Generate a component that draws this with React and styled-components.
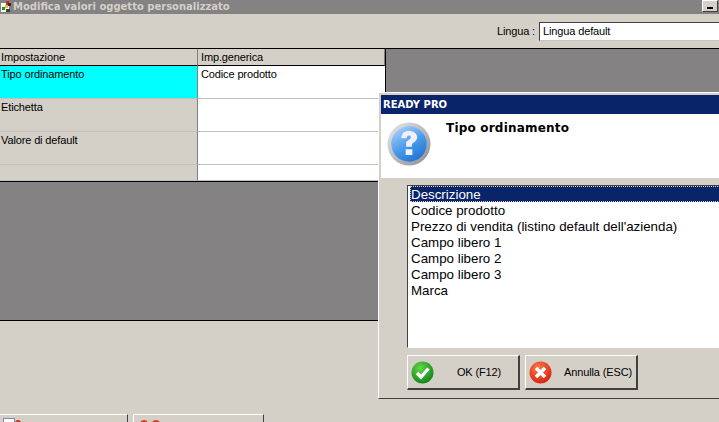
import React from "react";
import styled, { createGlobalStyle } from "styled-components";

const GlobalStyle = createGlobalStyle`
  html, body {
    margin: 0;
    padding: 0;
    background: #d4d0c8;
  }
  * {
    box-sizing: border-box;
  }
`;

const Screen = styled.div`
  position: relative;
  width: 719px;
  height: 422px;
  overflow: hidden;
  display: flex;
  flex-direction: column;
  background: #d4d0c8;
  font-family: "Liberation Sans", Arial, sans-serif;
  font-size: 11px;
  letter-spacing: -0.13px;
  color: #000;
`;

const TitleBar = styled.div`
  height: 14px;
  flex: none;
  display: flex;
  align-items: center;
  justify-content: space-between;
  background: #858284;
`;

const TitleText = styled.span`
  display: flex;
  align-items: center;
  gap: 1px;
  font-family: "DejaVu Sans", Verdana, sans-serif;
  font-weight: bold;
  font-size: 10px;
  letter-spacing: 0;
  color: #d4d0c8;
  line-height: 12px;
`;

const WindowButtons = styled.div`
  width: 17px;
  align-self: flex-start;
  display: flex;
  gap: 1px;
`;

const WindowButton = styled.div`
  width: 16px;
  height: 12px;
  flex: none;
  display: flex;
  align-items: flex-end;
  justify-content: center;
  padding-bottom: 2px;
  background: #d4d0c8;
  border-top: 1px solid #fff;
  border-left: 1px solid #fff;
  border-right: 1px solid #404040;
  border-bottom: 1px solid #404040;
  &::after {
    content: "";
    width: 6px;
    height: 2px;
    background: ${(p) => (p.$glyph ? "#000" : "transparent")};
  }
`;

const Toolbar = styled.div`
  height: 35px;
  flex: none;
  display: flex;
  justify-content: flex-end;
  align-items: flex-start;
  gap: 4px;
  padding-top: 8px;
  border-bottom: 1px solid #000;
`;

const FieldLabel = styled.span`
  line-height: 19px;
`;

const TextField = styled.div`
  width: 189px;
  margin-right: -9px;
  height: 19px;
  line-height: 17px;
  padding-left: 3px;
  background: #fff;
  border-top: 1px solid #404040;
  border-left: 1px solid #404040;
  border-bottom: 1px solid #c8c5be;
`;

const Workspace = styled.div`
  height: 272px;
  flex: none;
  background: #858284;
  border-bottom: 1px solid #000;
`;

const Grid = styled.div`
  width: 386px;
  display: grid;
  grid-template-columns: 198px 187px;
  grid-template-rows: 17px 33px 33px 33px 16px;
  background: #fff;
  border-right: 1px solid #000;
  border-bottom: 1px solid #000;
`;

const HeaderCell = styled.div`
  padding-left: ${(p) => p.$pad}px;
  line-height: 17px;
  background: #d4d0c8;
  border-right: 1px solid #808080;
  border-bottom: 1px solid #000;
`;

const LabelCell = styled.div`
  padding-left: 1px;
  line-height: 16px;
  background: ${(p) => (p.$active ? "#00ffff" : "#d4d0c8")};
  border-right: 1px solid #808080;
  border-bottom: 1px solid #c0c0c0;
`;

const ValueCell = styled.div`
  padding-left: 3px;
  line-height: 16px;
  background: #fff;
  border-bottom: 1px solid #c0c0c0;
`;

const Footer = styled.div`
  flex: 1;
  display: flex;
  align-items: flex-start;
  gap: 5px;
  padding-top: 93px;
  margin-left: -1px;
`;

const FooterButton = styled.div`
  width: ${(p) => p.$w}px;
  height: 12px;
  display: flex;
  gap: 3px;
  padding: 3px 0 0 ${(p) => p.$pad}px;
  background: #d4d0c8;
  border-top: 1px solid #fff;
  border-left: 1px solid #fff;
  border-right: 1px solid #404040;
`;

const Dialog = styled.div`
  position: absolute;
  left: 378px;
  top: 92px;
  width: 400px;
  height: 307px;
  display: flex;
  flex-direction: column;
  background: #d4d0c8;
  border-top: 1px solid #fff;
  border-left: 1px solid #fff;
  border-bottom: 1px solid #404040;
  padding: 2px 0 0 2px;
`;

const DialogTitle = styled.div`
  height: 19px;
  flex: none;
  padding-left: 2px;
  background: #0a246a;
  color: #fff;
  font-family: "DejaVu Sans", Verdana, sans-serif;
  font-weight: bold;
  font-size: 10px;
  letter-spacing: 0;
  line-height: 19px;
`;

const DialogHead = styled.div`
  height: 64px;
  flex: none;
  display: flex;
  background: #fff;
  padding: 8px 0 0 6px;
`;

const Heading = styled.div`
  margin: -1px 0 0 15px;
  font-family: "DejaVu Sans", Verdana, sans-serif;
  font-weight: bold;
  font-size: 12px;
  letter-spacing: 0.2px;
  line-height: 15px;
`;

const DialogBody = styled.div`
  display: flex;
  flex-direction: column;
  padding: 7px 0 0 26px;
`;

const List = styled.div`
  height: 163px;
  padding: 0 0 0 2px;
  background: #fff;
  border-top: 1px solid #404040;
  border-left: 1px solid #404040;
  border-bottom: 1px solid #fff;
  font-size: 13.33px;
  letter-spacing: 0;
`;

const ListItem = styled.div`
  height: 16px;
  line-height: 18px;
  padding-left: 1px;
  color: ${(p) => (p.$selected ? "#fff" : "#000")};
  background: ${(p) => (p.$selected ? "#0a246a" : "transparent")};
  outline: ${(p) => (p.$selected ? "1px dotted #d4d0c8" : "none")};
  outline-offset: -1px;
`;

const ButtonRow = styled.div`
  display: flex;
  gap: 5px;
  margin-top: 7px;
`;

const DialogButton = styled.div`
  width: ${(p) => p.$w}px;
  height: 35px;
  display: flex;
  align-items: center;
  padding-left: 3px;
  background: #d4d0c8;
  border-top: 1px solid #fff;
  border-left: 1px solid #fff;
  border-right: 2px solid #404040;
  border-bottom: 2px solid #404040;
`;

const ButtonText = styled.span`
  flex: 1;
  text-align: center;
  padding-left: ${(p) => p.$pad}px;
`;

const AppIcon = () => (
  <svg width="12" height="12" viewBox="0 0 12 12">
    <rect x="1" y="2" width="8" height="9" fill="#fff" />
    <rect x="6" y="0" width="3" height="4" fill="#e02020" />
    <rect x="2" y="6" width="3" height="3" fill="#1a9a30" />
    <rect x="5" y="4" width="3" height="3" fill="#e8c020" />
    <rect x="8" y="2" width="3" height="3" fill="#303030" />
    <rect x="6" y="8" width="4" height="3" fill="#404040" />
  </svg>
);

const QuestionIcon = () => (
  <svg width="44" height="44" viewBox="0 0 46 46">
    <defs>
      <linearGradient id="qBlue" x1="0.2" y1="0" x2="0.8" y2="1">
        <stop offset="0" stopColor="#a8d0f8" />
        <stop offset="0.5" stopColor="#4a9cec" />
        <stop offset="1" stopColor="#1f6fd0" />
      </linearGradient>
      <linearGradient id="qRing" x1="0" y1="0" x2="1" y2="1">
        <stop offset="0" stopColor="#e8e8ec" />
        <stop offset="1" stopColor="#8c8c94" />
      </linearGradient>
    </defs>
    <circle cx="23" cy="23" r="22.5" fill="url(#qRing)" />
    <circle cx="23" cy="23" r="18.5" fill="url(#qBlue)" />
    <path
      d="M15 17 C15 11 19 9.5 23 9.5 C28 9.5 31.5 12 31.5 16 C31.5 20 28 21 26 23 L26 26 L20 26 L20 21.5 C20 19.5 25 18.5 25 16 C25 14.5 24 14 23 14 C21.5 14 20.5 15 20.5 17 Z"
      fill="#f2eefa"
    />
    <rect x="19.5" y="28.5" width="7" height="6" fill="#f2eefa" />
  </svg>
);

const RoundIcon = ({ from, to, children }) => (
  <svg width="23" height="23" viewBox="0 0 23 23">
    <defs>
      <radialGradient id={from} cx="0.4" cy="0.3" r="0.8">
        <stop offset="0" stopColor={from} />
        <stop offset="1" stopColor={to} />
      </radialGradient>
    </defs>
    <circle cx="11.5" cy="11.5" r="11" fill={`url(#${from})`} />
    {children}
  </svg>
);

const CheckIcon = () => (
  <RoundIcon from="#62d84a" to="#0c7a14">
    <path d="M6 12 L10 16 L17.5 7.5" fill="none" stroke="#fff" strokeWidth="3.4" />
  </RoundIcon>
);

const CrossIcon = () => (
  <RoundIcon from="#ff7a4a" to="#d41a08">
    <path d="M7 7 L16 16 M16 7 L7 16" fill="none" stroke="#fff" strokeWidth="3.6" />
  </RoundIcon>
);

const ITEMS = [
  "Descrizione",
  "Codice prodotto",
  "Prezzo di vendita (listino default dell'azienda)",
  "Campo libero 1",
  "Campo libero 2",
  "Campo libero 3",
  "Marca",
];

export default function App() {
  return (
    <Screen>
      <GlobalStyle />
      <TitleBar>
        <TitleText>
          <AppIcon />
          Modifica valori oggetto personalizzato
        </TitleText>
        <WindowButtons>
          <WindowButton $glyph />
          <WindowButton />
        </WindowButtons>
      </TitleBar>
      <Toolbar>
        <FieldLabel>Lingua :</FieldLabel>
        <TextField>Lingua default</TextField>
      </Toolbar>
      <Workspace>
        <Grid>
          <HeaderCell $pad={1}>Impostazione</HeaderCell>
          <HeaderCell $pad={3}>Imp.generica</HeaderCell>
          <LabelCell $active>Tipo ordinamento</LabelCell>
          <ValueCell>Codice prodotto</ValueCell>
          <LabelCell>Etichetta</LabelCell>
          <ValueCell />
          <LabelCell>Valore di default</LabelCell>
          <ValueCell />
          <LabelCell />
          <ValueCell />
        </Grid>
      </Workspace>
      <Footer>
        <FooterButton $w={129} $pad={3}>
          <svg width="18" height="10" viewBox="0 0 18 10">
            <rect x="0.5" y="0.5" width="11" height="10" fill="#fff" stroke="#7a8ab0" />
            <circle cx="15" cy="5" r="3" fill="#d83018" />
          </svg>
        </FooterButton>
        <FooterButton $w={131} $pad={5}>
          <svg width="24" height="10" viewBox="0 0 24 10">
            <circle cx="5" cy="6" r="4" fill="#e03c18" />
            <circle cx="17" cy="6" r="4" fill="#e03c18" />
          </svg>
        </FooterButton>
      </Footer>
      <Dialog>
        <DialogTitle>READY PRO</DialogTitle>
        <DialogHead>
          <QuestionIcon />
          <Heading>Tipo ordinamento</Heading>
        </DialogHead>
        <DialogBody>
          <List>
            {ITEMS.map((item, i) => (
              <ListItem key={item} $selected={i === 0}>
                {item}
              </ListItem>
            ))}
          </List>
          <ButtonRow>
            <DialogButton $w={113}>
              <CheckIcon />
              <ButtonText $pad={6}>OK (F12)</ButtonText>
            </DialogButton>
            <DialogButton $w={113}>
              <CrossIcon />
              <ButtonText $pad={8}>Annulla (ESC)</ButtonText>
            </DialogButton>
          </ButtonRow>
        </DialogBody>
      </Dialog>
    </Screen>
  );
}
